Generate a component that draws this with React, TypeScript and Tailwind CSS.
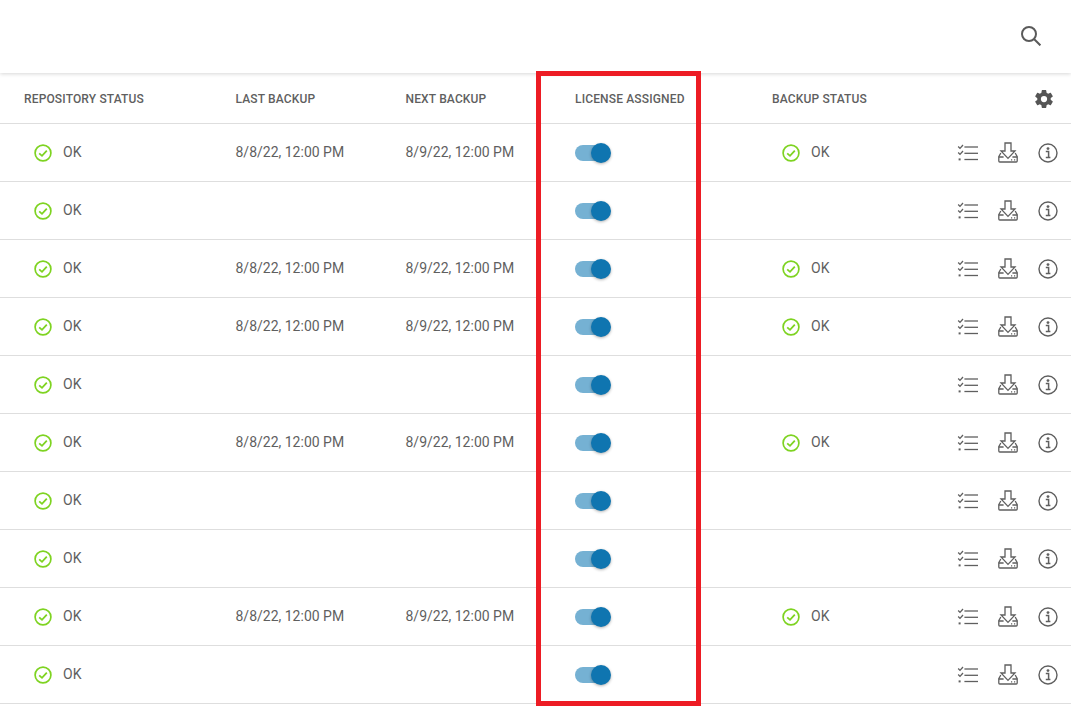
import { IoSettingsSharp } from "react-icons/io5";

const rows = [true, false, true, true, false, true, false, false, true, false];

const OkIcon = () => (
  <svg width="18" height="18" viewBox="0 0 18 18" fill="none" className="shrink-0">
    <circle cx="9" cy="9" r="7.9" stroke="#7ed321" strokeWidth="1.7" />
    <path d="M5.2 9.3 L8 11.8 L12.8 6.6" stroke="#7ed321" strokeWidth="1.8" />
  </svg>
);

const Ok = () => (
  <div className="flex items-center gap-[11px] pl-[10px]">
    <OkIcon />
    <span>OK</span>
  </div>
);

const ChecklistIcon = () => (
  <svg width="21" height="18" viewBox="0 0 21 18" fill="none" stroke="#5f5f5f" strokeWidth="1.3">
    <path d="M1.2 2.5 L3 4.4 L6 1" />
    <path d="M7.4 3 H21" />
    <path d="M1.2 8.5 L3 10.4 L6 7" />
    <path d="M7.4 9.3 H21" />
    <rect x="1.6" y="14.4" width="2" height="2" fill="#5f5f5f" stroke="none" />
    <path d="M7.4 15.5 H21" />
  </svg>
);

const DownloadIcon = () => (
  <svg width="20" height="21" viewBox="0 0 20 21" fill="none" stroke="#5f5f5f" strokeWidth="1.3">
    <path d="M7 1 H13 V9 H17 L10 16.4 L3 9 H7 Z" />
    <path d="M2.8 11 L0.8 14.6 V19 Q0.8 20 1.8 20 H18.2 Q19.2 20 19.2 19 V14.6 L17.2 11" />
    <path d="M0.8 15 H5.6 M14.4 15 H19.2" />
    <path d="M13 17.8 H14.2 M16 17.8 H17.2" />
  </svg>
);

const InfoIcon = () => (
  <svg width="20" height="20" viewBox="0 0 20 20" fill="none">
    <circle cx="10" cy="10" r="9" stroke="#5f5f5f" strokeWidth="1.4" />
    <circle cx="10" cy="5.6" r="1.4" fill="#5f5f5f" />
    <path d="M7.8 8.6 H10.6 V14.4 M7.8 14.6 H12.4" stroke="#5f5f5f" strokeWidth="1.5" />
  </svg>
);

const SearchIcon = () => (
  <svg width="20" height="20" viewBox="0 0 20 20" fill="none" stroke="#5a5a5a" strokeWidth="2">
    <circle cx="8" cy="8" r="7" />
    <path d="M13 13 L19.4 19.4" />
  </svg>
);

const Toggle = () => (
  <div className="relative h-[16px] w-[35px] rounded-full bg-[#75b1d3]">
    <div className="absolute left-[16px] top-[-2px] h-[20px] w-[20px] rounded-full bg-[#0f75b0] shadow-[0_1px_3px_rgba(0,0,0,0.3)]" />
  </div>
);

const gridCols = "grid grid-cols-[211.5px_170px_169.5px_197px_1fr] items-center pl-[24px]";

export default function App() {
  return (
    <div className="relative h-[728px] w-[1071px] overflow-hidden bg-white font-['Roboto',sans-serif] text-[14px] text-[#5f5f5f]">
      <header className="flex h-[73px] items-center justify-end pb-[2px] pr-[30px] shadow-[0_1px_4px_rgba(0,0,0,0.16)]">
        <SearchIcon />
      </header>

      <div className={`${gridCols} h-[51px] border-b border-[#dedede] pt-[1px] text-[12px] font-medium tracking-[0.15px]`}>
        <span>REPOSITORY STATUS</span>
        <span>LAST BACKUP</span>
        <span>NEXT BACKUP</span>
        <span>LICENSE ASSIGNED</span>
        <div className="flex items-center justify-between pr-[17px]">
          <span>BACKUP STATUS</span>
          <IoSettingsSharp size={20} className="text-[#555555]" />
        </div>
      </div>

      {rows.map((hasBackup, i) => (
        <div key={i} className={`${gridCols} h-[58px] border-b border-[#dedede]`}>
          <Ok />
          <span>{hasBackup ? "8/8/22, 12:00 PM" : ""}</span>
          <span>{hasBackup ? "8/9/22, 12:00 PM" : ""}</span>
          <Toggle />
          <div className="flex items-center justify-between pr-[13px]">
            {hasBackup ? <Ok /> : <span />}
            <div className="flex items-center gap-[20px]">
              <ChecklistIcon />
              <DownloadIcon />
              <InfoIcon />
            </div>
          </div>
        </div>
      ))}

      <div className="pointer-events-none absolute left-[536px] top-[71px] h-[635px] w-[165px] border-[5px] border-[#ed1c24]" />
    </div>
  );
}
